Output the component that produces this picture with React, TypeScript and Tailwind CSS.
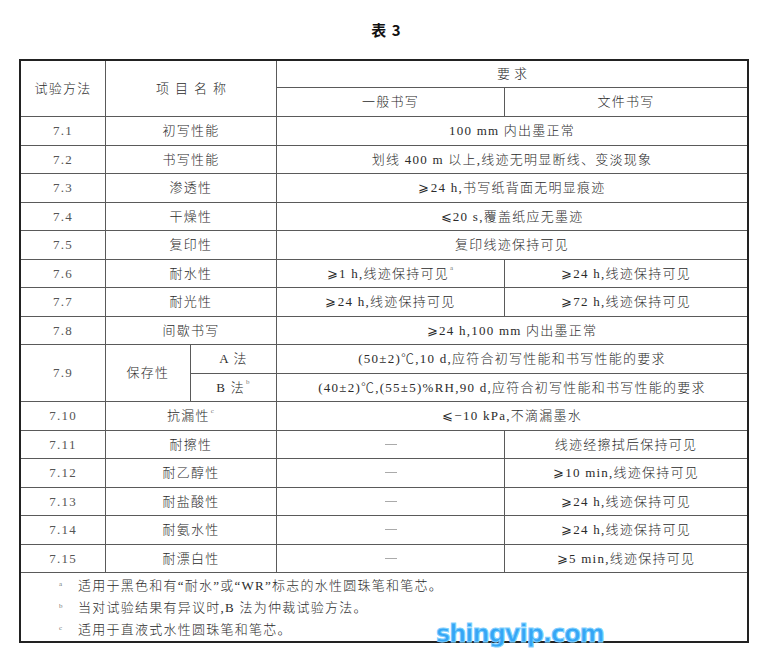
import React from "react";

const FONT = "[font-family:'Liberation_Serif','Noto_Sans_CJK_SC',serif]";

function C({
  children,
  className = "",
}: {
  children?: React.ReactNode;
  className?: string;
}) {
  return (
    <div
      className={`bg-white flex items-center justify-center text-[13px] tracking-[1.25px] text-[#2b2b2b] font-light whitespace-nowrap ${className}`}
    >
      {children}
    </div>
  );
}

function N({ children, className = "" }: { children: React.ReactNode; className?: string }) {
  return <C className={`text-[#555] tracking-[0.5px] ${className}`}>{children}</C>;
}

function Sup({ children }: { children: React.ReactNode }) {
  return <sup className="text-[7px] text-[#777] ml-[1px] -top-[5px]">{children}</sup>;
}

function Dash() {
  return (
    <C>
      <span className="block w-[12px] h-px bg-[#aaa]" />
    </C>
  );
}

type Row = {
  n: string;
  name: React.ReactNode;
  all?: React.ReactNode;
  a?: React.ReactNode;
  b?: React.ReactNode;
  dash?: boolean;
};

const GE = "⩾";
const LE = "⩽";

const rowsTop: Row[] = [
  { n: "7.1", name: "初写性能", all: "100 mm 内出墨正常" },
  { n: "7.2", name: "书写性能", all: "划线 400 m 以上,线迹无明显断线、变淡现象" },
  { n: "7.3", name: "渗透性", all: `${GE}24 h,书写纸背面无明显痕迹` },
  { n: "7.4", name: "干燥性", all: `${LE}20 s,覆盖纸应无墨迹` },
  { n: "7.5", name: "复印性", all: "复印线迹保持可见" },
  {
    n: "7.6",
    name: "耐水性",
    a: (
      <>
        {GE}1 h,线迹保持可见<Sup>a</Sup>
      </>
    ),
    b: `${GE}24 h,线迹保持可见`,
  },
  { n: "7.7", name: "耐光性", a: `${GE}24 h,线迹保持可见`, b: `${GE}72 h,线迹保持可见` },
  { n: "7.8", name: "间歇书写", all: `${GE}24 h,100 mm 内出墨正常` },
];

const rowsBottom: Row[] = [
  {
    n: "7.10",
    name: (
      <>
        抗漏性<Sup>c</Sup>
      </>
    ),
    all: `${LE}−10 kPa,不滴漏墨水`,
  },
  { n: "7.11", name: "耐擦性", dash: true, b: "线迹经擦拭后保持可见" },
  { n: "7.12", name: "耐乙醇性", dash: true, b: `${GE}10 min,线迹保持可见` },
  { n: "7.13", name: "耐盐酸性", dash: true, b: `${GE}24 h,线迹保持可见` },
  { n: "7.14", name: "耐氨水性", dash: true, b: `${GE}24 h,线迹保持可见` },
  { n: "7.15", name: "耐漂白性", dash: true, b: `${GE}5 min,线迹保持可见` },
];

function renderRow(r: Row) {
  return (
    <React.Fragment key={r.n}>
      <N>{r.n}</N>
      <C className="col-span-2">{r.name}</C>
      {r.all !== undefined ? (
        <C className="col-span-2">{r.all}</C>
      ) : (
        <>
          {r.dash ? <Dash /> : <C>{r.a}</C>}
          <C>{r.b}</C>
        </>
      )}
    </React.Fragment>
  );
}

export default function App() {
  return (
    <div className={`relative w-[771px] h-[662px] bg-white ${FONT}`}>
      <div className="pt-[21px] h-[59px] flex justify-center">
        <div className="h-[18px] leading-[18px] text-[15px] font-bold text-[#111] [font-family:'Noto_Sans_CJK_SC',sans-serif] tracking-[1px] pl-[2px]">
          表 3
        </div>
      </div>
      <div className="ml-[19px] w-[730px] grid grid-cols-[84px_84px_85px_227px_242px] grid-rows-[26px_28px_repeat(16,27.5px)_68px] gap-px bg-[#5a5a5a] border-2 border-[#222]">
        <C className="row-span-2">试验方法</C>
        <C className="row-span-2 col-span-2 tracking-[6px] pl-[6px]">项目名称</C>
        <C className="col-span-2 tracking-[4px] pl-[4px]">要求</C>
        <C>一般书写</C>
        <C>文件书写</C>

        {rowsTop.map(renderRow)}

        <N className="row-span-2">7.9</N>
        <C className="row-span-2">保存性</C>
        <C>A 法</C>
        <C className="col-span-2">(50±2)℃,10 d,应符合初写性能和书写性能的要求</C>
        <C>
          B 法<Sup>b</Sup>
        </C>
        <C className="col-span-2">(40±2)℃,(55±5)%RH,90 d,应符合初写性能和书写性能的要求</C>

        {rowsBottom.map(renderRow)}

        <div className="col-span-5 bg-white pt-[2px] text-[13px] tracking-[1.25px] text-[#2b2b2b] font-light">
          {[
            ["a", "适用于黑色和有“耐水”或“WR”标志的水性圆珠笔和笔芯。"],
            ["b", "当对试验结果有异议时,B 法为仲裁试验方法。"],
            ["c", "适用于直液式水性圆珠笔和笔芯。"],
          ].map(([k, t]) => (
            <div key={k} className="flex h-[22px] items-center">
              <span className="w-[57px] pl-[38px] text-[7px] text-[#777] self-start pt-[4px]">{k}</span>
              <span>{t}</span>
            </div>
          ))}
        </div>
      </div>
      <div className="absolute left-[436px] top-[619px] text-[24px] leading-[30px] font-bold tracking-[-1px] text-[#36a6f5] [font-family:'DejaVu_Sans',sans-serif] [-webkit-text-stroke:1px_#7fd0ff]">
        shingvip.com
      </div>
    </div>
  );
}
